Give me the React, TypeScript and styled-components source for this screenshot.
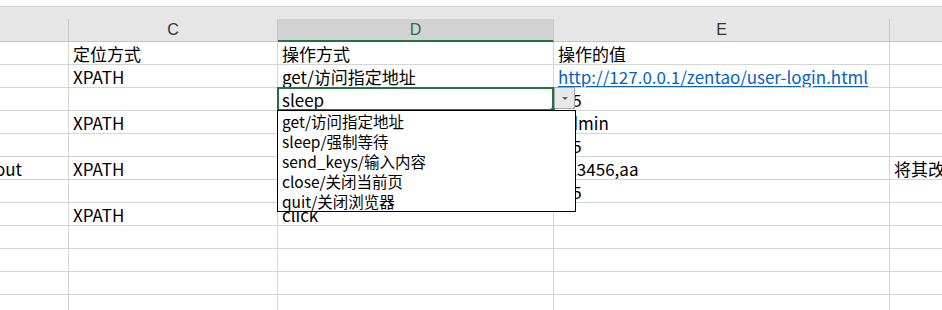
import styled, { createGlobalStyle } from "styled-components";

const GlobalStyle = createGlobalStyle`
  html, body {
    margin: 0;
    padding: 0;
    background: #ffffff;
    overflow: hidden;
  }
  body {
    font-family: "Noto Sans CJK SC", "Liberation Sans", sans-serif;
  }
`;

const COLS = [69, 209, 276, 336, 120];
const LETTERS = ["", "C", "D", "E", "F"];

type Row = string[];

const ROWS: Row[] = [
  ["", "定位方式", "操作方式", "操作的值", ""],
  ["", "XPATH", "get/访问指定地址", "http://127.0.0.1/zentao/user-login.html", ""],
  ["", "", "sleep", "0.5", ""],
  ["", "XPATH", "send_keys/输入内容", "admin", ""],
  ["", "", "sleep", "0.5", ""],
  ["out", "XPATH", "send_keys/输入内容", "123456,aa", "将其改为需要的值"],
  ["", "", "sleep", "0.5", ""],
  ["", "XPATH", "click", "", ""],
  ["", "", "", "", ""],
  ["", "", "", "", ""],
  ["", "", "", "", ""],
  ["", "", "", "", ""],
];

const OPTIONS = [
  "get/访问指定地址",
  "sleep/强制等待",
  "send_keys/输入内容",
  "close/关闭当前页",
  "quit/关闭浏览器",
];

const Page = styled.div`
  width: 942px;
  height: 310px;
  overflow: hidden;
  position: relative;
`;

const TopGap = styled.div`
  height: 6px;
  background: #ffffff;
  border-bottom: 1px solid #d4d4d4;
`;

const HeaderStrip = styled.div`
  height: 12px;
  background: #e6e6e6;
`;

const Grid = styled.div`
  display: grid;
  grid-template-columns: ${COLS.map((w) => `${w}px`).join(" ")};
  grid-auto-rows: 23px;
`;

const HeadCell = styled.div<{ $selected?: boolean }>`
  box-sizing: border-box;
  background: ${(p) => (p.$selected ? "#d2d2d2" : "#e6e6e6")};
  border-right: 1px solid #c6c6c6;
  border-bottom: ${(p) => (p.$selected ? "2px solid #217346" : "1px solid #c6c6c6")};
  color: ${(p) => (p.$selected ? "#217346" : "#333333")};
  font-family: "Liberation Sans", sans-serif;
  font-size: 16px;
  line-height: 22px;
  text-align: center;
`;

const Cell = styled.div<{ $active?: boolean; $bleed?: boolean; $link?: boolean }>`
  position: relative;
  box-sizing: border-box;
  border-right: 1px solid #d4d4d4;
  border-bottom: 1px solid #d4d4d4;
  padding-left: 4px;
  font-size: 17px;
  line-height: 23px;
  white-space: nowrap;
  overflow: ${(p) => (p.$active ? "visible" : "hidden")};
  color: ${(p) => (p.$link ? "#0563c1" : "#000000")};
  text-decoration: ${(p) => (p.$link ? "underline" : "none")};
  text-underline-offset: 2px;
  text-indent: ${(p) => (p.$bleed ? "-9px" : "0")};

  ${(p) =>
    p.$active &&
    `
    &::after {
      content: "";
      position: absolute;
      left: -1px;
      top: -1px;
      right: -1px;
      bottom: -1px;
      border: 2px solid #217346;
      pointer-events: none;
    }
  `}
`;

const DropButton = styled.div`
  position: absolute;
  left: 554px;
  top: 87px;
  width: 21px;
  height: 22px;
  box-sizing: border-box;
  background: #e8e8ea;
  border: 1px solid #a6a6a6;
  display: flex;
  align-items: center;
  justify-content: center;
`;

const FillHandle = styled.div`
  position: absolute;
  left: 551px;
  top: 108px;
  width: 4px;
  height: 4px;
  background: #217346;
`;

const Triangle = styled.span`
  width: 0;
  height: 0;
  border-left: 3.5px solid transparent;
  border-right: 3.5px solid transparent;
  border-top: 3.5px solid #606060;
`;

const List = styled.div`
  position: absolute;
  left: 277px;
  top: 110px;
  width: 299px;
  box-sizing: border-box;
  background: #ffffff;
  border: 1px solid #000000;
  padding-left: 4px;
`;

const Option = styled.div`
  font-size: 15.5px;
  line-height: 20px;
  color: #000000;
  white-space: nowrap;
`;

const App = () => {
  return (
    <Page>
      <GlobalStyle />
      <TopGap />
      <HeaderStrip />
      <Grid>
        {LETTERS.map((l, i) => (
          <HeadCell key={i} $selected={l === "D"}>
            {l}
          </HeadCell>
        ))}
        {ROWS.map((row, r) =>
          row.map((text, c) => (
            <Cell
              key={`${r}-${c}`}
              $active={r === 2 && c === 2}
              $bleed={c === 0 && text !== ""}
              $link={text.startsWith("http")}
            >
              {text}
            </Cell>
          ))
        )}
      </Grid>
      <DropButton>
        <Triangle />
      </DropButton>
      <FillHandle />
      <List>
        {OPTIONS.map((o) => (
          <Option key={o}>{o}</Option>
        ))}
      </List>
    </Page>
  );
};

export default App;
